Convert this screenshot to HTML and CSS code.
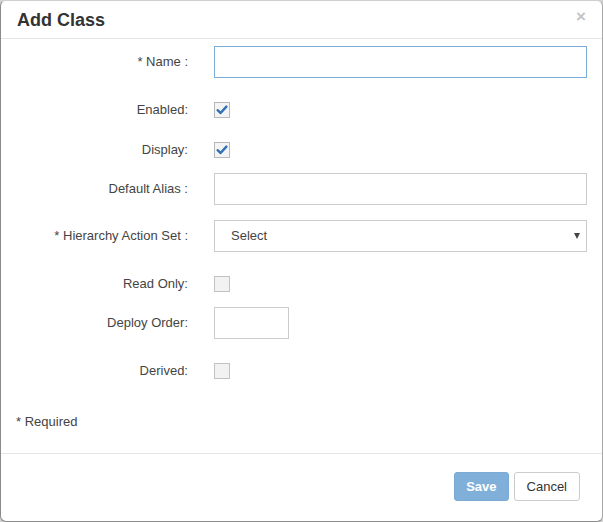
FILE: index.html
```html
<!DOCTYPE html>
<html lang="en">
<head>
<meta charset="utf-8">
<title>Add Class</title>
<link rel="stylesheet" href="styles.css">
</head>
<body>
<div class="modal">
  <div class="modal-header">
    <h4 class="modal-title">Add Class</h4>
    <span class="close">&times;</span>
  </div>
  <div class="modal-body">
    <div class="form-row">
      <label class="form-label">* Name :</label>
      <input class="form-input input-focus" type="text">
    </div>
    <div class="form-row check-row">
      <label class="form-label">Enabled:</label>
      <span class="checkbox checked"><svg viewBox="0 0 16 16" width="16" height="16"><path d="M3.6 8.2 L6.6 11 L12.4 4.6" fill="none" stroke="#3170b8" stroke-width="2.4" stroke-linecap="round" stroke-linejoin="round"/></svg></span>
    </div>
    <div class="form-row check-row">
      <label class="form-label">Display:</label>
      <span class="checkbox checked"><svg viewBox="0 0 16 16" width="16" height="16"><path d="M3.6 8.2 L6.6 11 L12.4 4.6" fill="none" stroke="#3170b8" stroke-width="2.4" stroke-linecap="round" stroke-linejoin="round"/></svg></span>
    </div>
    <div class="form-row">
      <label class="form-label">Default Alias :</label>
      <input class="form-input" type="text">
    </div>
    <div class="form-row">
      <label class="form-label">* Hierarchy Action Set :</label>
      <div class="select-wrap">
        <select class="form-select"><option>Select</option></select>
        <span class="select-arrow"></span>
      </div>
    </div>
    <div class="form-row check-row">
      <label class="form-label">Read Only:</label>
      <span class="checkbox"></span>
    </div>
    <div class="form-row">
      <label class="form-label">Deploy Order:</label>
      <input class="form-input input-small" type="text">
    </div>
    <div class="form-row check-row">
      <label class="form-label">Derived:</label>
      <span class="checkbox"></span>
    </div>
    <p class="required-note">* Required</p>
  </div>
  <div class="modal-footer">
    <button class="btn btn-primary" disabled>Save</button>
    <button class="btn btn-default">Cancel</button>
  </div>
</div>
</body>
</html>
```

FILE: styles.css
```css
* { box-sizing: border-box; }

html, body {
  margin: 0;
  padding: 0;
  background: #d2d2d2;
}

body {
  font-family: "Liberation Sans", Arial, Helvetica, sans-serif;
  font-size: 13px;
  line-height: 18px;
  color: #333;
}

.modal {
  width: 603px;
  height: 522px;
  background: #fff;
  border: 1px solid;
  border-color: #cfcfcf #a8a8a8 #8a8a8a #8a8a8a;
  border-radius: 6px;
  display: flex;
  flex-direction: column;
  overflow: hidden;
}

.modal-header {
  display: flex;
  justify-content: space-between;
  align-items: flex-start;
  padding: 9px 16px 8px 16px;
  border-bottom: 1px solid #e5e5e5;
}

.modal-title {
  margin: 0;
  font-size: 18px;
  line-height: 20px;
  font-weight: bold;
  color: #333;
}

.close {
  font-size: 17px;
  font-weight: bold;
  line-height: 14px;
  color: #c4c4c4;
  margin-top: 0;
}

.modal-body {
  padding: 7px 15px 21px 15px;
  flex: 1 0 auto;
}

.form-row {
  display: grid;
  grid-template-columns: 172px 1fr;
  column-gap: 26px;
  align-items: center;
  margin-bottom: 15px;
}

.check-row {
  padding-top: 9px;
}

.form-label {
  text-align: right;
  color: #444;
}

.check-row .form-label {
  line-height: 16px;
}

.form-input {
  display: block;
  width: 100%;
  height: 32px;
  border: 1px solid #ccc;
  border-radius: 0;
  padding: 6px 12px;
  font: inherit;
  color: #555;
  background: #fff;
  outline: none;
}

.input-focus {
  border-color: #79acd8;
}

.input-small {
  width: 75px;
}

.select-wrap {
  position: relative;
}

.form-select {
  display: block;
  width: 100%;
  height: 32px;
  border: 1px solid #ccc;
  border-radius: 0;
  padding: 0 12px 0 16px;
  font: inherit;
  font-size: 13px;
  color: #444;
  background: #fff;
  appearance: none;
  -webkit-appearance: none;
  outline: none;
}

.select-arrow {
  position: absolute;
  right: 7px;
  top: 13px;
  width: 0;
  height: 0;
  border-left: 3px solid transparent;
  border-right: 3px solid transparent;
  border-top: 6px solid #444;
}

.checkbox {
  display: block;
  width: 16px;
  height: 16px;
  border: 1px solid #c2c2c2;
  background: #f2f2f2;
}

.checkbox svg {
  display: block;
  margin: -1px;
}

.checkbox.checked {
  background: #f4f4f4;
  border-color: #b8b8b8;
}

.required-note {
  margin: 34px 0 0 0;
  color: #444;
}

.modal-footer {
  display: flex;
  justify-content: flex-end;
  gap: 5px;
  padding: 18px 22px 20px 15px;
  border-top: 1px solid #e5e5e5;
}

.btn {
  font: inherit;
  font-size: 13px;
  line-height: 17px;
  padding: 5px 12px;
  border: 1px solid #ccc;
  border-radius: 3px;
  cursor: pointer;
}

.btn-primary {
  background: #80b0da;
  border-color: #7aaad5;
  color: #fff;
  font-weight: bold;
  padding: 5px 11px;
}

.btn-default {
  background: #fff;
  color: #333;
}
```
